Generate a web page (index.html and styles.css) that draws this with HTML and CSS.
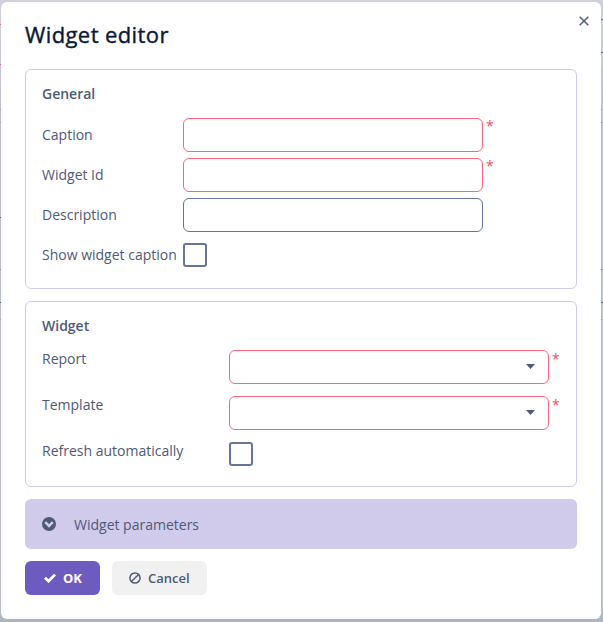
FILE: index.html
```html
<!DOCTYPE html>
<html lang="en">
<head>
<meta charset="utf-8">
<title>Widget editor</title>
<link rel="stylesheet" href="styles.css">
</head>
<body>
<main class="dialog">
  <button class="close" aria-label="Close"><svg width="10" height="10" viewBox="0 0 10 10"><path d="M.7.7l8.6 8.6M9.3.7L.7 9.3"/></svg></button>
  <h1>Widget editor</h1>
  <section class="panel general">
    <h2>General</h2>
    <div class="row"><label>Caption</label><span class="field required"></span><span class="star">*</span></div>
    <div class="row"><label>Widget Id</label><span class="field required"></span><span class="star">*</span></div>
    <div class="row"><label>Description</label><span class="field"></span></div>
    <div class="row"><label>Show widget caption</label><span class="check"></span></div>
  </section>
  <section class="panel widget">
    <h2>Widget</h2>
    <div class="row"><label>Report</label><span class="field required"><svg class="caret" width="9" height="5" viewBox="0 0 9 5"><path d="M0 0h9L4.500 5z"/></svg></span><span class="star">*</span></div>
    <div class="row"><label>Template</label><span class="field required"><svg class="caret" width="9" height="5" viewBox="0 0 9 5"><path d="M0 0h9L4.500 5z"/></svg></span><span class="star">*</span></div>
    <div class="row"><label>Refresh automatically</label><span class="check"></span></div>
  </section>
  <div class="expander">
    <svg width="14" height="14" viewBox="0 0 14 14"><circle cx="7" cy="7" r="7" fill="#4e5a77"/><path d="M3.200 5.100L7 8.900l3.800-3.800" fill="none" stroke="#d1cbeb" stroke-width="2.500"/></svg>
    <span>Widget parameters</span>
  </div>
  <footer class="actions">
    <button class="btn ok"><svg width="12" height="10" viewBox="0 0 12 10"><path d="M1 4.800L4.500 8.200 11 1.600" fill="none" stroke="#fff" stroke-width="2.700"/></svg>OK</button>
    <button class="btn cancel"><svg width="12" height="12" viewBox="0 0 12 12"><path d="M2.400 9.600l7.200-7.200" stroke="#4e5a77" stroke-width="1.400"/><circle cx="6" cy="6" r="5.100" fill="none" stroke="#4e5a77" stroke-width="1.500"/></svg>Cancel</button>
  </footer>
</main>
</body>
</html>
```
FILE: styles.css
```css
* { box-sizing: border-box; }
body {
  margin: 0;
  height: 622px;
  padding: 2px 2px 3px 1px;
  overflow: hidden;
  font: 14px/20px "Open Sans", sans-serif;
  color: #4e5a77;
  background:
    linear-gradient(#e0626f, #e0626f) 0 24px / 1px 1px no-repeat,
    linear-gradient(#e0626f, #e0626f) 0 64px / 1px 1px no-repeat,
    linear-gradient(#57627f, #57627f) 0 217px / 1px 1px no-repeat,
    linear-gradient(#57627f, #57627f) 100% 19px / 2px 1px no-repeat,
    linear-gradient(#57627f, #57627f) 100% 52px / 2px 1px no-repeat,
    linear-gradient(#a5a6bd, #a5a6bd) 0 109px / 100% 1px no-repeat,
    linear-gradient(#a0a2bd, #a0a2bd) 0 122px / 100% 1px no-repeat,
    linear-gradient(#858ca0, #858ca0) 0 269px / 100% 1px no-repeat,
    linear-gradient(#57627f, #57627f) 0 302px / 100% 1px no-repeat,
    linear-gradient(#a5a6bd, #a5a6bd) 0 319px / 100% 1px no-repeat,
    linear-gradient(#d0d1dc, #bdc1ce 120px, #bdc1ce 600px, #adb3c0);
}
.dialog {
  position: relative;
  height: 617px;
  padding: 15px 24px 24px;
  border-radius: 6px;
  background: #fff;
}
.close {
  position: absolute;
  top: 14px;
  right: 12px;
  width: 10px;
  height: 10px;
  padding: 0;
  border: 0;
  background: none;
}
.close svg { display: block; fill: none; stroke: #4e5a77; stroke-width: 1.5; }
h1 {
  margin: 0 0 18px;
  font-size: 22px;
  line-height: 34px;
  font-weight: 400;
  letter-spacing: .4px;
  -webkit-text-stroke: .4px #0b1a38;
  color: #0b1a38;
}
.panel {
  margin-bottom: 12px;
  padding: 14px 16px 0;
  border: 1px solid #d1cbeb;
  border-radius: 6px;
}
h2 { margin: 0; font-size: 14px; line-height: 20px; font-weight: 600; }
.row { display: flex; }
.general { height: 220px; }
.widget { height: 186px; }
.general h2 { margin-bottom: 14px; }
.general .row { height: 34px; margin-bottom: 6px; align-items: center; }
.general label { width: 141px; }
.general .field { width: 300px; }
.widget h2 { margin-bottom: 14px; }
.widget .row { height: 34px; margin-bottom: 12px; }
.widget label { width: 187px; margin-top: -1px; }
.widget .field { width: 320px; }
label { flex: none; white-space: nowrap; }
.field {
  display: flex;
  justify-content: flex-end;
  align-items: center;
  height: 34px;
  padding: 0 13px 1px 0;
  border: 1px solid #66759c;
  border-radius: 6px;
}
.field.required { border-color: #fc657e; }
.caret { display: block; fill: #4e5a77; }
.star { align-self: flex-start; margin-left: 3px; color: #e8515f; line-height: 18px; }
.general .star { line-height: 16px; }
.check { width: 24px; height: 24px; border: 2px solid #66759c; border-radius: 3px; }
.expander {
  display: flex;
  align-items: center;
  gap: 18px;
  height: 50px;
  padding-left: 17px;
  border-radius: 6px;
  background: #d1cbeb;
}
.expander span { padding-top: 2px; }
.actions { display: flex; gap: 12px; margin-top: 12px; }
.btn {
  display: flex;
  align-items: center;
  gap: 7px;
  height: 34px;
  padding: 0 0 0 19px;
  border: 0;
  border-radius: 6px;
  font: 600 13px/18px "Open Sans", sans-serif;
}
.ok { width: 75px; background: #6e5bc0; color: #fff; font-weight: 700; }
.cancel { width: 95px; padding-left: 17px; background: #f1f1f1; color: #4e5a77; }
```
